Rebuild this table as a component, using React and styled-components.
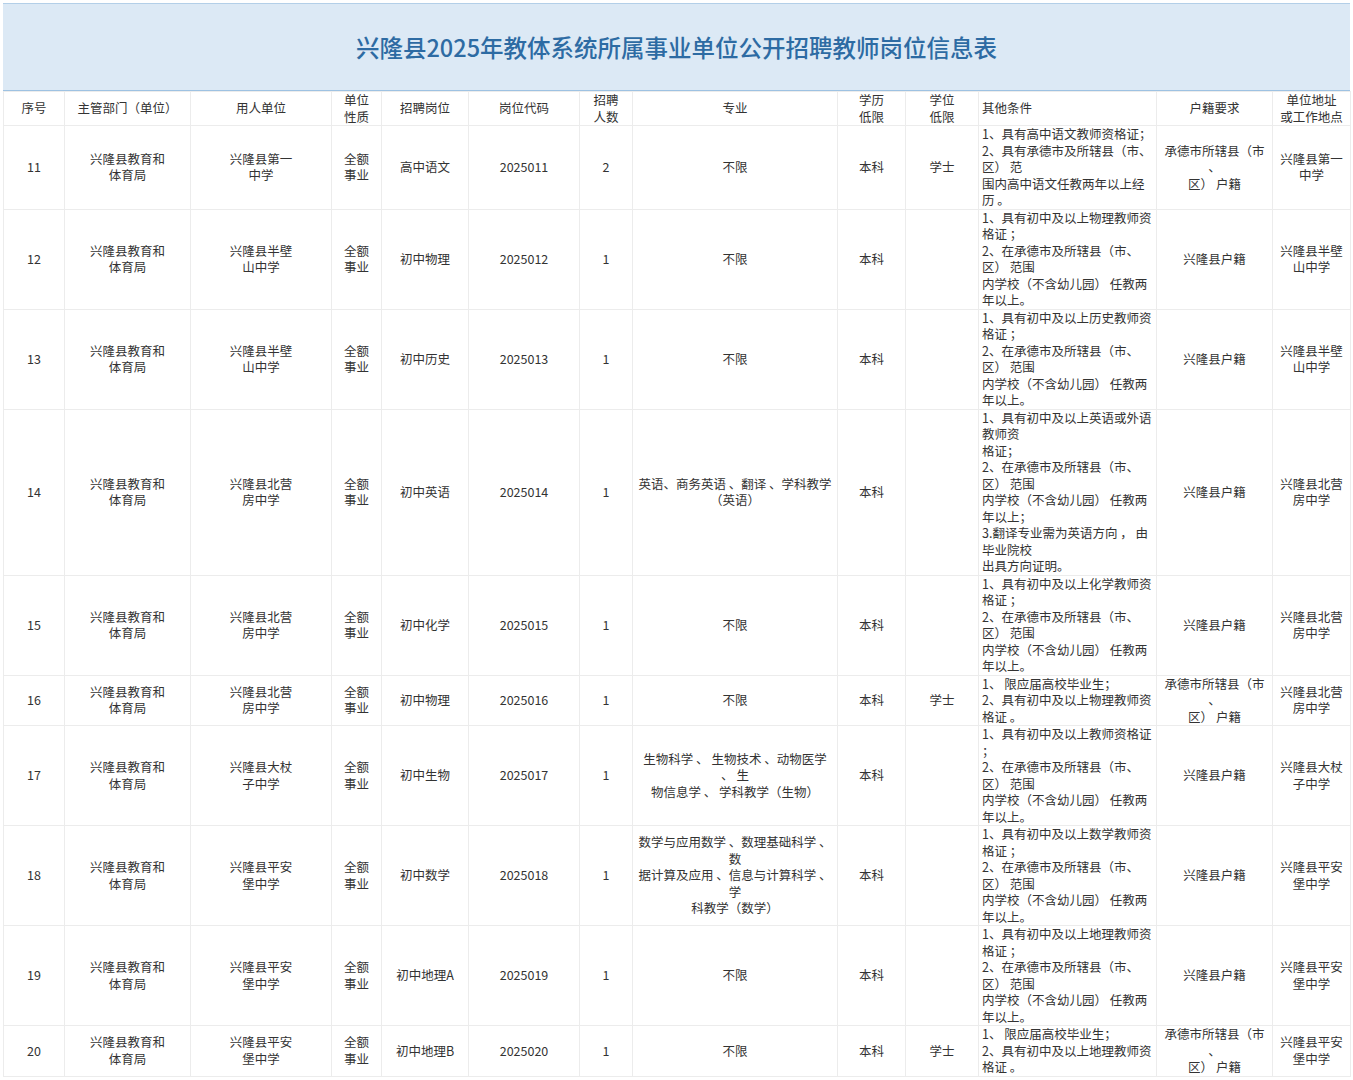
import React from 'react';
import styled, { createGlobalStyle } from 'styled-components';

/// /////////////////////////////////////////////
// styled
/// /////////////////////////////////////////////

const GlobalStyle = createGlobalStyle`
  body {
    margin: 0;
    padding: 3px 3px 0 3px;
    background: #fff;
    font-family: "Noto Sans CJK SC", "Noto Sans", sans-serif;
    color: #333;
  }
`;

const Page = styled.div`
  width: 1347px;
`;

const TitleBar = styled.div`
  height: 86px;
  display: flex;
  align-items: center;
  justify-content: center;
  background: #dce9f5;
  border-top: 1px solid #b3cfe8;
  border-bottom: 1px solid #9ec2e2;
  font-size: 23.5px;
  font-weight: 500;
  color: #2d6ba3;
`;

const Table = styled.table`
  width: 1347px;
  table-layout: fixed;
  border-collapse: collapse;
  font-size: 12.5px;
  line-height: 16.5px;
`;

const Cell = styled.td`
  padding: 0 ${p => (p.$left ? '3px' : '1px')};
  border: 1px solid #ececec;
  text-align: ${p => (p.$left ? 'left' : 'center')};
  vertical-align: middle;
  white-space: pre;
  overflow: hidden;
  color: #333;
`;

const HeadCell = styled(Cell).attrs({ as: 'th' })`
  font-weight: normal;
`;

/// /////////////////////////////////////////////
// data
/// /////////////////////////////////////////////

const widths = [61, 126, 141, 50, 87, 111, 53, 205, 68, 73, 178, 116, 78];

const head = [
  '序号',
  '主管部门（单位）',
  '用人单位',
  '单位\n性质',
  '招聘岗位',
  '岗位代码',
  '招聘\n人数',
  '专业',
  '学历\n低限',
  '学位\n低限',
  '其他条件',
  '户籍要求',
  '单位地址\n或工作地点',
];

const dept = '兴隆县教育和\n体育局';
const kind = '全额\n事业';
const cdHuji = '承德市所辖县（市\n、\n区） 户籍';
const xlHuji = '兴隆县户籍';
const cond = subject =>
  `1、具有初中及以上${subject}教师资\n格证 ；\n2、在承德市及所辖县（市、\n区） 范围\n内学校（不含幼儿园） 任教两\n年以上。`;
const fresh = subject => `1、 限应届高校毕业生；\n2、具有初中及以上${subject}教师资\n格证 。`;

const rows = [
  {
    no: '11',
    unit: '兴隆县第一\n中学',
    post: '高中语文',
    num: '2',
    major: '不限',
    degree: '学士',
    cond: '1、具有高中语文教师资格证；\n2、具有承德市及所辖县（市、\n区） 范\n围内高中语文任教两年以上经\n历 。',
    huji: cdHuji,
  },
  { no: '12', unit: '兴隆县半壁\n山中学', post: '初中物理', num: '1', major: '不限', degree: '', cond: cond('物理'), huji: xlHuji },
  { no: '13', unit: '兴隆县半壁\n山中学', post: '初中历史', num: '1', major: '不限', degree: '', cond: cond('历史'), huji: xlHuji },
  {
    no: '14',
    unit: '兴隆县北营\n房中学',
    post: '初中英语',
    num: '1',
    major: '英语、商务英语 、翻译 、学科教学\n（英语）',
    degree: '',
    cond: '1、具有初中及以上英语或外语\n教师资\n格证；\n2、在承德市及所辖县（市、\n区） 范围\n内学校（不含幼儿园） 任教两\n年以上；\n3.翻译专业需为英语方向 ， 由\n毕业院校\n出具方向证明。',
    huji: xlHuji,
  },
  { no: '15', unit: '兴隆县北营\n房中学', post: '初中化学', num: '1', major: '不限', degree: '', cond: cond('化学'), huji: xlHuji },
  { no: '16', unit: '兴隆县北营\n房中学', post: '初中物理', num: '1', major: '不限', degree: '学士', cond: fresh('物理'), huji: cdHuji },
  {
    no: '17',
    unit: '兴隆县大杖\n子中学',
    post: '初中生物',
    num: '1',
    major: '生物科学 、 生物技术 、动物医学\n、 生\n物信息学 、 学科教学（生物）',
    degree: '',
    cond: '1、具有初中及以上教师资格证\n；\n2、在承德市及所辖县（市、\n区） 范围\n内学校（不含幼儿园） 任教两\n年以上。',
    huji: xlHuji,
  },
  {
    no: '18',
    unit: '兴隆县平安\n堡中学',
    post: '初中数学',
    num: '1',
    major: '数学与应用数学 、数理基础科学 、\n数\n据计算及应用 、信息与计算科学 、\n学\n科教学（数学）',
    degree: '',
    cond: cond('数学'),
    huji: xlHuji,
  },
  { no: '19', unit: '兴隆县平安\n堡中学', post: '初中地理A', num: '1', major: '不限', degree: '', cond: cond('地理'), huji: xlHuji },
  { no: '20', unit: '兴隆县平安\n堡中学', post: '初中地理B', num: '1', major: '不限', degree: '学士', cond: fresh('地理'), huji: cdHuji },
];

/// /////////////////////////////////////////////
// component
/// /////////////////////////////////////////////

const Row = ({ row }) => (
  <tr>
    <Cell>{row.no}</Cell>
    <Cell>{dept}</Cell>
    <Cell>{row.unit}</Cell>
    <Cell>{kind}</Cell>
    <Cell>{row.post}</Cell>
    <Cell>{`20250${row.no}`}</Cell>
    <Cell>{row.num}</Cell>
    <Cell>{row.major}</Cell>
    <Cell>本科</Cell>
    <Cell>{row.degree}</Cell>
    <Cell $left>{row.cond}</Cell>
    <Cell>{row.huji}</Cell>
    <Cell>{row.unit}</Cell>
  </tr>
);

export default function App() {
  return (
    <Page>
      <GlobalStyle />
      <TitleBar>兴隆县2025年教体系统所属事业单位公开招聘教师岗位信息表</TitleBar>
      <Table>
        <colgroup>
          {widths.map((w, i) => (
            <col key={i} style={{ width: w }} />
          ))}
        </colgroup>
        <thead>
          <tr>
            {head.map((h, i) => (
              <HeadCell key={h} $left={i === 10}>
                {h}
              </HeadCell>
            ))}
          </tr>
        </thead>
        <tbody>
          {rows.map(r => (
            <Row key={r.no} row={r} />
          ))}
        </tbody>
      </Table>
    </Page>
  );
}
